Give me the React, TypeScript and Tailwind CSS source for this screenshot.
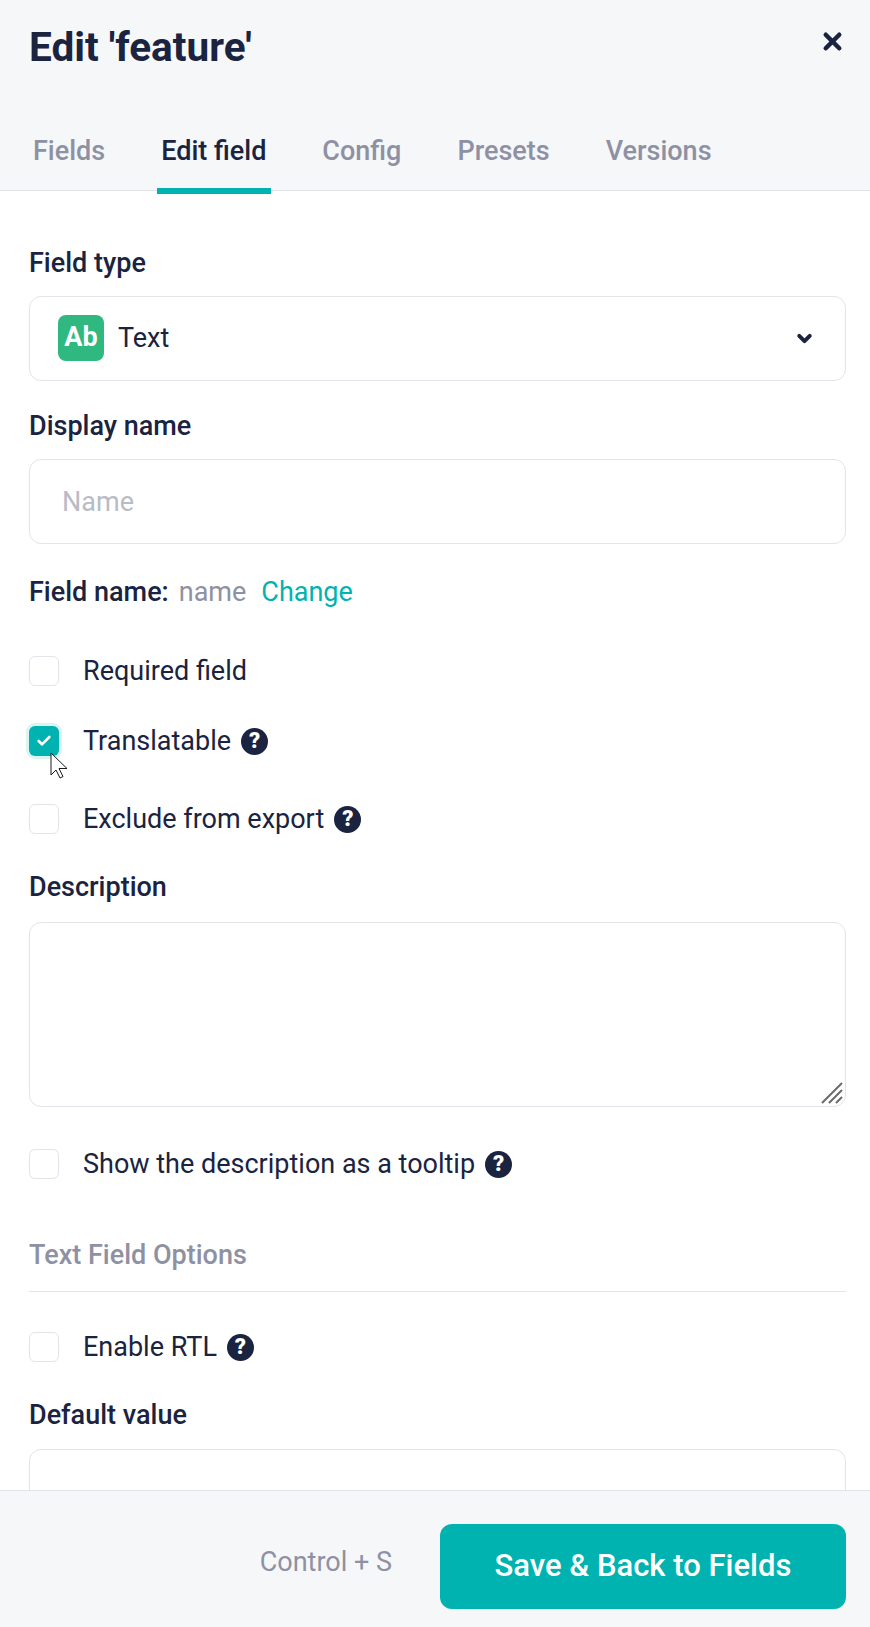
import { X, ChevronDown, Check } from "lucide-react";

function Help() {
  return (
    <span className="ml-[10px] flex h-[27px] w-[27px] items-center justify-center rounded-full bg-[#1a2340] text-[22px] font-black leading-none text-white">
      ?
    </span>
  );
}

function CheckRow({ label, help, checked, className }: { label: string; help?: boolean; checked?: boolean; className?: string }) {
  return (
    <div className={"flex h-[30px] items-center " + (className ?? "")}>
      {checked ? (
        <span className="relative flex h-[30px] w-[30px] items-center justify-center rounded-[6px] bg-[#00b3b0] shadow-[0_0_0_3px_#d9f4f3]">
          <Check size={16} strokeWidth={4} className="text-white" />
          <svg className="absolute left-[21px] top-[26px]" width="20" height="28" viewBox="0 0 20 28">
            <path d="M1 1v22l5-5 4 8 3-1.500-4-8h8z" fill="#fff" stroke="#1a1a1a" strokeWidth="1" />
          </svg>
        </span>
      ) : (
        <span className="h-[30px] w-[30px] rounded-[6px] border border-[#e3e4e9] bg-white" />
      )}
      <span className="ml-[24px] text-[27px] text-[#1a2340]">{label}</span>
      {help && <Help />}
    </div>
  );
}

const tabs = ["Fields", "Edit field", "Config", "Presets", "Versions"];

export default function App() {
  return (
    <div className="flex h-[1627px] w-[870px] flex-col overflow-hidden bg-white font-['Roboto',sans-serif] text-[#1a2340]">
      <header className="h-[191px] shrink-0 border-b border-[#e3e4e9] bg-[#f6f7f9] px-[29px]">
        <div className="flex h-[94px] items-center justify-between">
          <h1 className="text-[40.500px] font-bold leading-none">Edit 'feature'</h1>
          <X size={27} strokeWidth={4} className="-mt-[12px] mr-[-5px]" />
        </div>
        <nav className="mt-[37px] flex gap-[56px] pl-[4px]">
          {tabs.map((t) => (
            <div key={t} className="relative flex h-[57px] items-start">
              <span className={"text-[27px] font-medium " + (t === "Edit field" ? "text-[#1a2340]" : "text-[#8e91a3]")}>{t}</span>
              {t === "Edit field" && <span className="absolute -left-[4px] -right-[5px] top-[57px] h-[6px] bg-[#00b3b0]" />}
            </div>
          ))}
        </nav>
      </header>

      <main className="min-h-0 flex-1 overflow-hidden pl-[29px] pr-[24px] pt-[57px]">
        <label className="block text-[27px] font-medium leading-[30px]">Field type</label>
        <div className="mt-[18px] flex h-[85px] items-center rounded-[12px] border border-[#e3e4e9] pl-[28px] pr-[30px]">
          <span className="flex h-[46px] w-[46px] -translate-y-[1px] items-center justify-center rounded-[8px] bg-[#2fb87f] text-[27px] font-bold text-white">Ab</span>
          <span className="ml-[14px] flex-1 text-[27px]">Text</span>
          <ChevronDown size={21} strokeWidth={4.500} />
        </div>

        <label className="mt-[30px] block text-[27px] font-medium leading-[30px]">Display name</label>
        <div className="mt-[18px] flex h-[85px] items-center rounded-[12px] border border-[#e3e4e9] px-[32px] pt-[2px] text-[27px] text-[#b9bbc6]">Name</div>

        <div className="mt-[33px] flex text-[27px] leading-[30px]">
          <span className="font-medium">Field name:</span>
          <span className="ml-[10px] text-[#8e91a3]">name</span>
          <span className="ml-[15px] text-[#00b3b0]">Change</span>
        </div>

        <CheckRow className="mt-[49px]" label="Required field" />
        <CheckRow className="mt-[40px]" label="Translatable" help checked />
        <CheckRow className="mt-[48px]" label="Exclude from export" help />

        <label className="mt-[38px] block text-[27px] font-medium leading-[30px]">Description</label>
        <div className="relative mt-[20px] h-[185px] rounded-[12px] border border-[#e3e4e9]">
          <svg className="absolute bottom-[2px] right-[2px]" width="22" height="22" viewBox="0 0 22 22">
            <path d="M1 21 21 1M8 21 21 8M15 21l6-6" stroke="#6b6b6b" strokeWidth="2" />
          </svg>
        </div>
        <CheckRow className="mt-[42px]" label="Show the description as a tooltip" help />

        <div className="mt-[61px] text-[27px] font-medium leading-[30px] text-[#8e91a3]">Text Field Options</div>
        <div className="mt-[21px] h-px bg-[#e3e4e9]" />
        <CheckRow className="mt-[40px]" label="Enable RTL" help />
        <label className="mt-[38px] block text-[27px] font-medium leading-[30px]">Default value</label>
        <div className="mt-[19px] h-[85px] rounded-[12px] border border-[#e3e4e9]" />
      </main>

      <footer className="flex h-[137px] shrink-0 items-center justify-end border-t border-[#e3e4e9] bg-[#f6f7f9] pr-[24px] pt-[14px]">
        <span className="mr-[48px] -mt-[8px] text-[27px] text-[#8e91a3]">Control + S</span>
        <button className="h-[85px] w-[406px] rounded-[12px] bg-[#00b3b0] text-[31px] font-medium text-white">Save &amp; Back to Fields</button>
      </footer>
    </div>
  );
}
